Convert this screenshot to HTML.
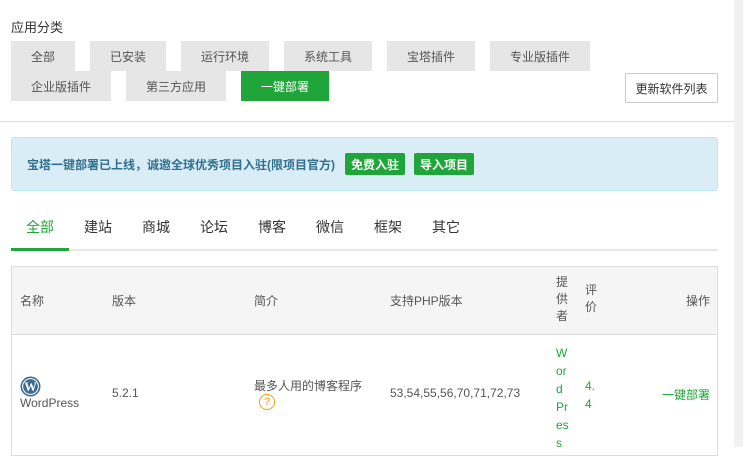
<!DOCTYPE html>
<html><head><meta charset="utf-8"><style>
*{margin:0;padding:0;box-sizing:border-box}
body{width:743px;height:447px;overflow:hidden;background:#fff;font-family:"Liberation Sans","Noto Sans CJK SC",sans-serif;font-size:12px;color:#555;position:relative}
.a{position:absolute;white-space:nowrap}
.b{position:absolute;background:#e6e6e6;color:#555;font-size:12px;display:flex;align-items:center;justify-content:center;height:30px}
.g{background:#20a53a;color:#fff}
.sb{position:absolute;right:0;top:0;width:9px;height:447px;background:#f1f1f1}
</style></head><body>
<div class="sb"></div>
<div class="a" style="left:11px;top:17px;font-size:13px;color:#333">应用分类</div>
<div class="b" style="left:11px;top:41px;width:64px">全部</div>
<div class="b" style="left:90px;top:41px;width:76px">已安装</div>
<div class="b" style="left:181px;top:41px;width:88px">运行环境</div>
<div class="b" style="left:284px;top:41px;width:88px">系统工具</div>
<div class="b" style="left:387px;top:41px;width:88px">宝塔插件</div>
<div class="b" style="left:490px;top:41px;width:100px">专业版插件</div>
<div class="b" style="left:11px;top:71px;width:100px">企业版插件</div>
<div class="b" style="left:126px;top:71px;width:100px">第三方应用</div>
<div class="b g" style="left:241px;top:71px;width:88px">一键部署</div>
<div class="a" style="left:625px;top:73px;width:93px;height:30px;border:1px solid #ccc;border-radius:2px;display:flex;align-items:center;justify-content:center;color:#333">更新软件列表</div>
<div class="a" style="left:0;top:121px;width:734px;height:1px;background:#ddd"></div>
<div class="a" style="left:11px;top:137px;width:707px;height:54px;background:#d9edf7;border:1px solid #bce8f1;border-radius:3px"></div>
<div class="a" style="left:27px;top:156px;color:#31708f;font-weight:bold;font-size:12px">宝塔一键部署已上线，诚邀全球优秀项目入驻(限项目官方)</div>
<div class="a" style="left:345px;top:153px;width:60px;height:22px;background:#20a53a;color:#fff;border-radius:2px;display:flex;align-items:center;justify-content:center;font-weight:bold">免费入驻</div>
<div class="a" style="left:414px;top:153px;width:60px;height:22px;background:#20a53a;color:#fff;border-radius:2px;display:flex;align-items:center;justify-content:center;font-weight:bold">导入项目</div>
<div class="a" style="left:11px;top:249px;width:707px;height:2px;background:#e6e6e6"></div>
<div class="a" style="left:11px;top:248px;width:58px;height:3px;background:#20a53a"></div>
<div class="a" style="left:26px;top:217px;font-size:14px;color:#20a53a">全部</div>
<div class="a" style="left:84px;top:217px;font-size:14px;color:#333">建站</div>
<div class="a" style="left:142px;top:217px;font-size:14px;color:#333">商城</div>
<div class="a" style="left:200px;top:217px;font-size:14px;color:#333">论坛</div>
<div class="a" style="left:258px;top:217px;font-size:14px;color:#333">博客</div>
<div class="a" style="left:316px;top:217px;font-size:14px;color:#333">微信</div>
<div class="a" style="left:374px;top:217px;font-size:14px;color:#333">框架</div>
<div class="a" style="left:432px;top:217px;font-size:14px;color:#333">其它</div>
<div class="a" style="left:11px;top:266px;width:707px;height:190px;border:1px solid #ddd"></div>
<div class="a" style="left:12px;top:267px;width:705px;height:68px;background:#f5f5f5;border-bottom:1px solid #ddd"></div>
<div class="a" style="left:20px;top:292px">名称</div>
<div class="a" style="left:112px;top:292px">版本</div>
<div class="a" style="left:254px;top:292px">简介</div>
<div class="a" style="left:390px;top:292px">支持PHP版本</div>
<div class="a" style="left:556px;top:274px;line-height:17px;white-space:normal;width:12px">提<br>供<br>者</div>
<div class="a" style="left:585px;top:282px;line-height:17px">评<br>价</div>
<div class="a" style="left:686px;top:292px">操作</div>
<svg class="a" style="left:20px;top:376px" width="21" height="21" viewBox="0 0 20 20"><circle cx="10" cy="10" r="9.5" fill="#3d6a8f"/><circle cx="10" cy="10" r="7.5" fill="none" stroke="#fff" stroke-width="1"/><text x="10" y="14.5" font-size="12" font-weight="bold" text-anchor="middle" fill="#fff" font-family="Liberation Serif">W</text></svg>
<div class="a" style="left:20px;top:396px;font-size:12px">WordPress</div>
<div class="a" style="left:112px;top:386px">5.2.1</div>
<div class="a" style="left:254px;top:377px">最多人用的博客程序</div>
<div class="a" style="left:259px;top:394px;width:16px;height:16px;border:1.5px solid #f39c12;border-radius:50%;color:#f39c12;font-size:11px;display:flex;align-items:center;justify-content:center">?</div>
<div class="a" style="left:390px;top:386px">53,54,55,56,70,71,72,73</div>
<div class="a" style="left:556px;top:344px;line-height:18px;color:#20a53a">W<br>or<br>d<br>Pr<br>es<br>s</div>
<div class="a" style="left:585px;top:377px;line-height:18px;color:#20a53a">4.<br>4</div>
<div class="a" style="left:662px;top:386px;color:#20a53a">一键部署</div>
</body></html>
